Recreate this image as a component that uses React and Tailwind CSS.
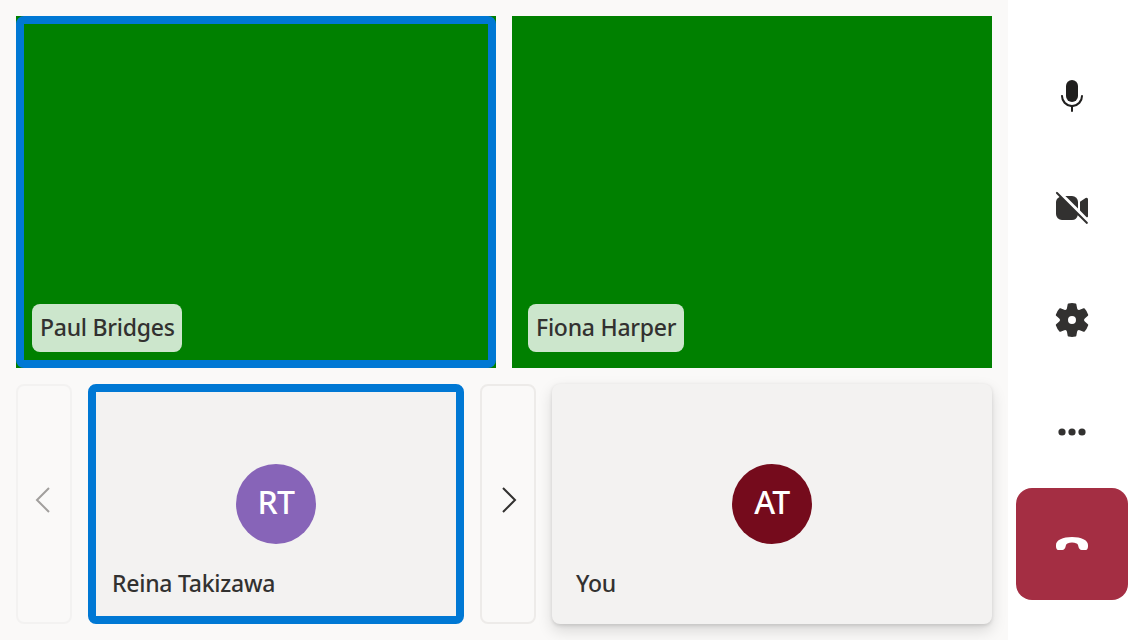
import React from "react";

const controlClass = "flex size-28 items-center justify-center rounded-2xl";

function MicIcon() {
  return (
    <svg viewBox="0 0 20 20" className="size-10 fill-[#201f1e]">
      <path d="M10 13a3 3 0 0 0 3-3V5a3 3 0 0 0-6 0v5a3 3 0 0 0 3 3Z" />
      <path d="M5 9.5c.28 0 .5.22.5.5a4.5 4.5 0 1 0 9 0 .5.5 0 0 1 1 0 5.5 5.5 0 0 1-5 5.48v2.02a.5.5 0 0 1-1 0v-2.02A5.5 5.5 0 0 1 4.5 10c0-.28.22-.5.5-.5Z" />
    </svg>
  );
}

function CameraOffIcon() {
  return (
    <svg viewBox="0 0 20 20" className="size-10 fill-[#323130]">
      <path d="M2.85 2.15a.5.5 0 1 0-.7.7l1.6 1.6A3 3 0 0 0 2 7v6a3 3 0 0 0 3 3h5a3 3 0 0 0 2.87-2.43l4.28 4.28a.5.5 0 0 0 .7-.7l-15-15Z" />
      <path d="M6.7 4H10a3 3 0 0 1 3 3v3.3L6.7 4Z" />
      <path d="M14 6.93v4.37l3.3 3.3c.4.2.7-.1.7-.5V5.7a.75.75 0 0 0-1.2-.65L14 6.93Z" />
    </svg>
  );
}

function SettingsIcon() {
  return (
    <svg viewBox="0 0 20 20" className="size-10 fill-[#323130]">
      <path d="M1.91 7.38A8.5 8.5 0 0 1 3.7 4.3a.5.5 0 0 1 .54-.13l1.92.68a1 1 0 0 0 1.32-.76l.36-2a.5.5 0 0 1 .4-.4 8.53 8.53 0 0 1 3.55 0c.2.04.35.2.38.4l.37 2a1 1 0 0 0 1.32.76l1.92-.68a.5.5 0 0 1 .54.13 8.5 8.5 0 0 1 1.78 3.08c.06.2 0 .4-.15.54l-1.56 1.32a1 1 0 0 0 0 1.52l1.56 1.32a.5.5 0 0 1 .15.54 8.5 8.5 0 0 1-1.78 3.08.5.5 0 0 1-.54.13l-1.92-.68a1 1 0 0 0-1.32.76l-.37 2a.5.5 0 0 1-.38.4 8.53 8.53 0 0 1-3.56 0 .5.5 0 0 1-.39-.4l-.36-2a1 1 0 0 0-1.32-.76l-1.92.68a.5.5 0 0 1-.54-.13 8.5 8.5 0 0 1-1.78-3.08.5.5 0 0 1 .15-.54l1.56-1.32a1 1 0 0 0 0-1.52L2.06 7.92a.5.5 0 0 1-.15-.54ZM8 10a2 2 0 1 0 4 0 2 2 0 0 0-4 0Z" />
    </svg>
  );
}

function MoreIcon() {
  return (
    <svg viewBox="0 0 20 20" className="size-10 fill-[#323130]">
      <circle cx="5" cy="10" r="1.8" />
      <circle cx="10" cy="10" r="1.8" />
      <circle cx="15" cy="10" r="1.8" />
    </svg>
  );
}

function HangUpIcon() {
  return (
    <svg viewBox="0 0 20 20" className="size-10 fill-white">
      <path d="M18 10.5v.7c0 1.2-.6 1.9-1.6 1.85l-1.6-.1c-.8-.05-1.3-.5-1.5-1.3l-.3-1.1c-.1-.4-.3-.6-.7-.8A6 6 0 0 0 10 9.3a6 6 0 0 0-2.3.45c-.4.2-.6.4-.7.8l-.3 1.1c-.2.8-.7 1.25-1.5 1.3l-1.6.1C2.6 13.1 2 12.4 2 11.2v-.7c0-2.4 3.4-4 8-4s8 1.6 8 4Z" />
    </svg>
  );
}

function Chevron({ points, className }) {
  return (
    <svg viewBox="0 0 40 40" className={`mb-2 size-10 shrink-0 fill-none ${className}`}>
      <polyline points={points} strokeWidth="2" />
    </svg>
  );
}

function VideoTile({ name, speaking, labelWidth }) {
  return (
    <div className="relative flex w-[480px] items-end bg-[#008000] p-4">
      {speaking && <div className="absolute inset-0 rounded-lg border-8 border-[#0078d4]" />}
      <div className={`relative flex h-12 items-center rounded-lg bg-white/80 px-2 pb-0.5 whitespace-nowrap ${labelWidth}`}>
        {name}
      </div>
    </div>
  );
}

function Avatar({ initials, className }) {
  return (
    <div
      className={`flex size-20 items-center justify-center rounded-full pb-1 text-[32px] font-medium tracking-[-0.6px] text-white ${className}`}
    >
      {initials}
    </div>
  );
}

export default function App() {
  return (
    <div className="flex h-[640px] w-[1136px] overflow-hidden bg-[#faf9f8] font-['Noto_Sans','Open_Sans',sans-serif] text-[23px] leading-8 font-medium tracking-[-0.25px] text-[#323130]">
      <main className="flex w-[1008px] flex-col gap-4 p-4">
        <div className="flex h-[352px] gap-4">
          <VideoTile name="Paul Bridges" labelWidth="w-[150px]" speaking />
          <VideoTile name="Fiona Harper" labelWidth="w-[156px]" />
        </div>
        <div className="flex h-60 gap-4">
          <button className="flex w-14 items-center justify-center rounded-lg border-2 border-[#f3f2f1]">
            <Chevron points="25,8 13,20 25,32" className="stroke-[#a19f9d]" />
          </button>
          <div className="flex w-[376px] flex-col items-center rounded-lg border-8 border-[#0078d4] bg-[#f3f2f1] px-4 pt-[72px]">
            <Avatar initials="RT" className="bg-[#8764b8]" />
            <div className="mt-[23px] self-start">Reina Takizawa</div>
          </div>
          <button className="flex w-14 items-center justify-center rounded-lg border-2 border-[#edebe9]">
            <Chevron points="15,8 27,20 15,32" className="stroke-[#323130]" />
          </button>
          <div className="flex w-[440px] flex-col items-center rounded-lg bg-[#f3f2f1] px-6 pt-20 shadow-[0_6.4px_14.4px_rgba(0,0,0,0.132),0_1.2px_3.6px_rgba(0,0,0,0.108)]">
            <Avatar initials="AT" className="bg-[#750b1c]" />
            <div className="mt-[23px] self-start">You</div>
          </div>
        </div>
      </main>
      <aside className="relative flex w-32 flex-col items-center bg-white pt-10">
        <button aria-label="Mute" className={controlClass}><MicIcon /></button>
        <button aria-label="Turn camera on" className={controlClass}><CameraOffIcon /></button>
        <button aria-label="Devices" className={controlClass}><SettingsIcon /></button>
        <button aria-label="More" className={controlClass}><MoreIcon /></button>
        <button aria-label="Leave" className={`${controlClass} bg-[#a42e43]`}><HangUpIcon /></button>
      </aside>
    </div>
  );
}
